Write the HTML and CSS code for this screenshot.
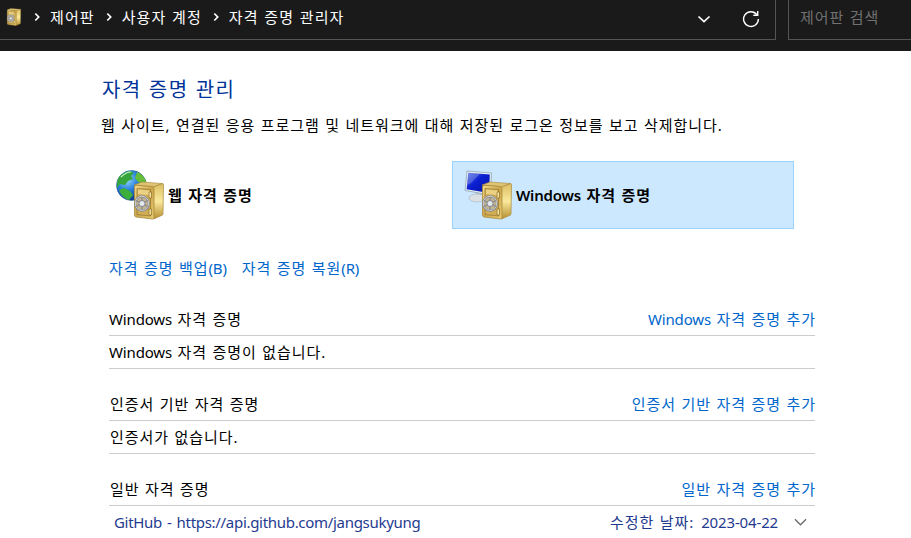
FILE: index.html
```html
<!DOCTYPE html>
<html lang="ko">
<head>
<meta charset="utf-8">
<title>자격 증명 관리자</title>
<link rel="stylesheet" href="styles.css">
</head>
<body>
<svg class="defs" width="0" height="0" aria-hidden="true">
  <defs>
    <linearGradient id="front" x1="0" y1="0" x2="1" y2="1"><stop offset="0" stop-color="#f3dc8b"/><stop offset=".5" stop-color="#cda64c"/><stop offset="1" stop-color="#e9cb70"/></linearGradient>
    <linearGradient id="side" x1="0" y1="0" x2="0" y2="1"><stop offset="0" stop-color="#dcbd62"/><stop offset=".5" stop-color="#fae99c"/><stop offset="1" stop-color="#b78e31"/></linearGradient>
    <radialGradient id="sea" cx=".35" cy=".3" r=".75"><stop offset="0" stop-color="#9bdcff"/><stop offset=".45" stop-color="#2c83dc"/><stop offset="1" stop-color="#0b2f87"/></radialGradient>
    <linearGradient id="screen" x1="0" y1="0" x2="1" y2="1"><stop offset="0" stop-color="#4a68e0"/><stop offset=".45" stop-color="#0a1ed0"/><stop offset="1" stop-color="#0512a0"/></linearGradient>
    <g id="safe">
      <path d="M18 15L26 12L46.500 13.500L38 17Z" fill="#dfc473" stroke="#a88a3c" stroke-width=".6"/>
      <path d="M37.500 17L46.500 13.500Q47.500 13.500 47.500 15L47 44Q47 45 45.500 45.500L37.500 49Z" fill="url(#side)" stroke="#a88a3c" stroke-width=".7"/>
      <path d="M20 15.200L36.500 16.500Q38 17 38 18.500V47Q38 49 36.500 49L20 47Q18.500 46.500 18.500 45V17Q18.500 15.200 20 15.200Z" fill="url(#front)" stroke="#a88a3c" stroke-width=".8"/>
      <path d="M21 18.500L34.500 19.500V46L21 44.500Z" fill="#d1ad56" stroke="#93742e" stroke-width=".7"/>
      <path d="M22 19.600L33.500 20.500V25L22 24Z" fill="#ead184"/>
      <path d="M33 22h2.500v6H33zM33 39h2.500v6H33z" fill="#f2df9a" stroke="#80611f" stroke-width=".6"/>
      <ellipse cx="26" cy="33.500" rx="6.900" ry="7.300" fill="#c3b48f" stroke="#82858d" stroke-width="2"/>
      <ellipse cx="26" cy="33.300" rx="6.700" ry="7.100" fill="none" stroke="#e1e3e7" stroke-width=".8"/>
      <path d="M26 27v13M20 30.500l12 6M20 36.500l12-6" stroke="#858a93" stroke-width="1.300"/>
      <circle cx="26" cy="33.500" r="3" fill="#e6e8ec" stroke="#747984" stroke-width=".8"/>
    </g>
  </defs>
</svg>

<header class="topbar">
  <nav class="address">
    <svg class="crumb-icon" viewBox="17 11 32 39"><use href="#safe"/></svg>
    <svg class="chev" viewBox="0 0 6 10"><path d="M1.300 1.500L4.700 5L1.300 8.500"/></svg>
    <span>제어판</span>
    <svg class="chev" viewBox="0 0 6 10"><path d="M1.300 1.500L4.700 5L1.300 8.500"/></svg>
    <span>사용자 계정</span>
    <svg class="chev" viewBox="0 0 6 10"><path d="M1.300 1.500L4.700 5L1.300 8.500"/></svg>
    <span>자격 증명 관리자</span>
    <svg class="drop" viewBox="0 0 14 8"><path d="M1.500 1.500L7 6.700L12.500 1.500"/></svg>
    <svg class="reload" viewBox="0 0 18 18"><path d="M14.800 4.500A7.400 7.400 0 1 0 16.400 9"/><path d="M15.700 1V5.200H11.300"/></svg>
  </nav>
  <div class="search">제어판 검색</div>
</header>

<main class="content">
  <h1>자격 증명 관리</h1>
  <p class="desc">웹 사이트, 연결된 응용 프로그램 및 네트워크에 대해 저장된 로그온 정보를 보고 삭제합니다.</p>

  <div class="vaults">
    <a class="vault">
      <svg class="vault-icon" viewBox="0 0 48 50">
        <circle cx="15.500" cy="15.500" r="15" fill="url(#sea)" stroke="#28639a" stroke-width=".6"/>
        <path d="M3 7Q7 2 14 1L18 3L15 6L17 9L12 11L9 15L4 14L1 18Q.5 11 3 7Z" fill="#38a53c"/>
        <path d="M21 2Q27 4 30 11L29 18L26 13L22 12L19 8Z" fill="#65bd39"/>
        <path d="M3 20L8 18L14 21L17 25L13 30Q6 28 3 20Z" fill="#3eae3b"/>
        <path d="M5 7Q10 2 15 2" stroke="#c9f3c5" stroke-width="1.200" fill="none"/>
        <use href="#safe"/>
      </svg>
      <span>웹 자격 증명</span>
    </a>
    <a class="vault selected">
      <svg class="vault-icon" viewBox="0 0 48 50">
        <path d="M12 23L18 24V28H11Z" fill="#b8c3cc"/>
        <ellipse cx="13" cy="28" rx="8" ry="4" fill="#dce1e6" stroke="#a5b0ba" stroke-width=".6"/>
        <path d="M3 1L27.500 3L26.500 25L1 20.500Z" fill="#e9eef3" stroke="#91a4b6" stroke-width=".8"/>
        <path d="M4.300 2.700L25.800 4.500L25 23L2.600 19.200Z" fill="url(#screen)"/>
        <path d="M4.300 2.700L16 3.700L7 13L3.200 15Z" fill="#fff" opacity=".22"/>
        <use href="#safe"/>
      </svg>
      <span><span class="latin">Windows</span> 자격 증명</span>
    </a>
  </div>

  <div class="actions">
    <a>자격 증명 백업<span class="latin">(B)</span></a>
    <a>자격 증명 복원<span class="latin">(R)</span></a>
  </div>

  <section>
    <div class="row"><span><span class="latin">Windows</span> 자격 증명</span><a><span class="latin">Windows</span> 자격 증명 추가</a></div>
    <div class="row"><span><span class="latin">Windows</span> 자격 증명이 없습니다.</span></div>
  </section>
  <section>
    <div class="row"><span class="inset">인증서 기반 자격 증명</span><a>인증서 기반 자격 증명 추가</a></div>
    <div class="row"><span class="inset">인증서가 없습니다.</span></div>
  </section>
  <section>
    <div class="row"><span class="inset">일반 자격 증명</span><a>일반 자격 증명 추가</a></div>
    <div class="row entry">
      <span class="latin name">GitHub - https://api.github.com/jangsukyung</span>
      <span class="modified">수정한 날짜:</span>
      <span class="latin date">2023-04-22</span>
      <svg class="expand" viewBox="0 0 14 8"><path d="M1 1L7 7L13 1"/></svg>
    </div>
  </section>
</main>
</body>
</html>
```
FILE: styles.css
```css
* { box-sizing: border-box; }
body {
  margin: 0;
  height: 538px;
  overflow: hidden;
  background: #fff;
  color: #000;
  font: 15px/20px "Noto Sans", "Noto Sans CJK KR", sans-serif;
  letter-spacing: .95px;
  word-spacing: .65px;
  white-space: nowrap;
}
.defs { display: block; }
svg { flex: none; }
.latin { letter-spacing: -.15px; }

.topbar {
  display: flex;
  gap: 12px;
  height: 51px;
  background: #1a1a1a;
  color: #fff;
}
.address {
  display: flex;
  align-items: center;
  width: 776px;
  height: 40px;
  padding: 0 15px 6px 6px;
  border: solid #555;
  border-width: 0 1px 1px 0;
}
.address span { letter-spacing: 1.1px; }
.crumb-icon { width: 16px; height: 18px; }
.chev { width: 6px; height: 10px; margin: 0 10px 0 12px; }
.chev ~ .chev { margin-left: 11px; }
.chev path, .drop path, .reload path { fill: none; stroke: #fff; stroke-width: 1.7; }
.drop { width: 14px; height: 8px; margin-left: auto; margin-top: 4px; }
.reload { width: 18px; height: 18px; margin-left: 31px; margin-top: 4px; }
.reload path { stroke-width: 1.4; }
.search {
  flex: 1;
  height: 40px;
  padding: 7px 0 0 11px;
  border: solid #555;
  border-width: 0 0 1px 1px;
  color: #717171;
}

.content { padding: 25px 96px 0 101px; }
h1 {
  margin: 0 0 0 1px;
  color: #003399;
  font-size: 20px;
  font-weight: 400;
  line-height: 28px;
  letter-spacing: 1.4px;
}
.desc { margin: 11px 0 0; }
.vaults {
  display: grid;
  grid-template-columns: 342px 342px;
  column-gap: 6px;
  margin: 26px 0 0 3px;
}
.vault {
  display: flex;
  align-items: center;
  gap: 4px;
  height: 68px;
  padding-left: 11px;
  border: 1px solid transparent;
  font-weight: 600;
}
.vault .latin { letter-spacing: -.2px; }
.vault > span { padding-bottom: 1px; }
.vault.selected { background: #cce8ff; border-color: #99d1ff; }
.vault-icon { width: 48px; height: 50px; }
.actions {
  display: flex;
  gap: 15px;
  margin: 29px 0 25px 8px;
}
a { color: #0066cc; }
.vault { color: #000; }
section { margin: 0 0 19px 8px; }
.row {
  display: flex;
  justify-content: space-between;
  height: 33px;
  padding-top: 5.500px;
  border-bottom: 1px solid #ccc;
}
.row a { margin-right: -1px; }
.inset { padding-left: 1px; }
.entry {
  justify-content: flex-start;
  align-items: center;
  padding: 0 8px 2px 5px;
  border: 0;
  color: #1f3b8f;
}
.name { letter-spacing: -.3px; word-spacing: 1.4px; }
.modified { margin-left: auto; }
.date { margin-left: 7px; }
.expand { width: 13px; height: 8px; margin-left: 16px; }
.expand path { fill: none; stroke: #666; stroke-width: 1.3; }
```
